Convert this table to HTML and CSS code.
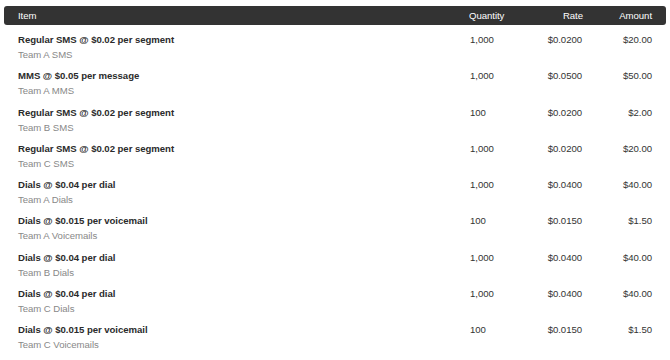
FILE: index.html
```html
<!DOCTYPE html>
<html>
<head>
<meta charset="utf-8">
<link rel="stylesheet" href="styles.css">
</head>
<body>
<table class="invoice">
  <colgroup>
    <col class="w-item">
    <col class="w-qty">
    <col class="w-rate">
    <col class="w-amt">
  </colgroup>
  <thead>
    <tr>
      <th class="col-item">Item</th>
      <th class="col-qty">Quantity</th>
      <th class="col-rate">Rate</th>
      <th class="col-amt">Amount</th>
    </tr>
  </thead>
  <tbody>
    <tr><td class="col-item"><div class="title">Regular SMS @ $0.02 per segment</div><div class="sub">Team A SMS</div></td><td class="col-qty">1,000</td><td class="col-rate">$0.0200</td><td class="col-amt">$20.00</td></tr>
    <tr><td class="col-item"><div class="title">MMS @ $0.05 per message</div><div class="sub">Team A MMS</div></td><td class="col-qty">1,000</td><td class="col-rate">$0.0500</td><td class="col-amt">$50.00</td></tr>
    <tr><td class="col-item"><div class="title">Regular SMS @ $0.02 per segment</div><div class="sub">Team B SMS</div></td><td class="col-qty">100</td><td class="col-rate">$0.0200</td><td class="col-amt">$2.00</td></tr>
    <tr><td class="col-item"><div class="title">Regular SMS @ $0.02 per segment</div><div class="sub">Team C SMS</div></td><td class="col-qty">1,000</td><td class="col-rate">$0.0200</td><td class="col-amt">$20.00</td></tr>
    <tr><td class="col-item"><div class="title">Dials @ $0.04 per dial</div><div class="sub">Team A Dials</div></td><td class="col-qty">1,000</td><td class="col-rate">$0.0400</td><td class="col-amt">$40.00</td></tr>
    <tr><td class="col-item"><div class="title">Dials @ $0.015 per voicemail</div><div class="sub">Team A Voicemails</div></td><td class="col-qty">100</td><td class="col-rate">$0.0150</td><td class="col-amt">$1.50</td></tr>
    <tr><td class="col-item"><div class="title">Dials @ $0.04 per dial</div><div class="sub">Team B Dials</div></td><td class="col-qty">1,000</td><td class="col-rate">$0.0400</td><td class="col-amt">$40.00</td></tr>
    <tr><td class="col-item"><div class="title">Dials @ $0.04 per dial</div><div class="sub">Team C Dials</div></td><td class="col-qty">1,000</td><td class="col-rate">$0.0400</td><td class="col-amt">$40.00</td></tr>
    <tr><td class="col-item"><div class="title">Dials @ $0.015 per voicemail</div><div class="sub">Team C Voicemails</div></td><td class="col-qty">100</td><td class="col-rate">$0.0150</td><td class="col-amt">$1.50</td></tr>
  </tbody>
</table>
</body>
</html>
```

FILE: styles.css
```css
html, body {
  margin: 0;
  padding: 0;
  background: #fff;
}
body {
  padding: 6px 4px 0 4px;
  font-family: "Liberation Sans", Arial, Helvetica, sans-serif;
  font-size: 9.6px;
  letter-spacing: -0.05px;
  color: #333;
}
.invoice {
  width: 662px;
  table-layout: fixed;
  border-collapse: separate;
  border-spacing: 0;
}
.w-item { width: 465px; }
.w-qty { width: 70px; }
.w-rate { width: 44px; }
.w-amt { width: 83px; }
.invoice th {
  background: #333;
  color: #fff;
  font-weight: normal;
  height: 19px;
  padding: 0;
  line-height: 19px;
}
.invoice th.col-item { border-radius: 3px 0 0 3px; }
.invoice th.col-amt { border-radius: 0 3px 3px 0; }
.invoice .col-item {
  text-align: left;
  padding-left: 14px;
}
.invoice .col-qty { text-align: left; }
.invoice .col-rate { text-align: right; }
.invoice .col-amt {
  text-align: right;
  padding-right: 14px;
}
.invoice td {
  padding-top: 3px;
  padding-bottom: 3.25px;
  vertical-align: top;
  line-height: 15px;
}
.invoice tbody tr:first-child td {
  padding-top: 7px;
}
.title {
  font-weight: bold;
  color: #2b2b2b;
}
.sub {
  color: #888;
}
```
